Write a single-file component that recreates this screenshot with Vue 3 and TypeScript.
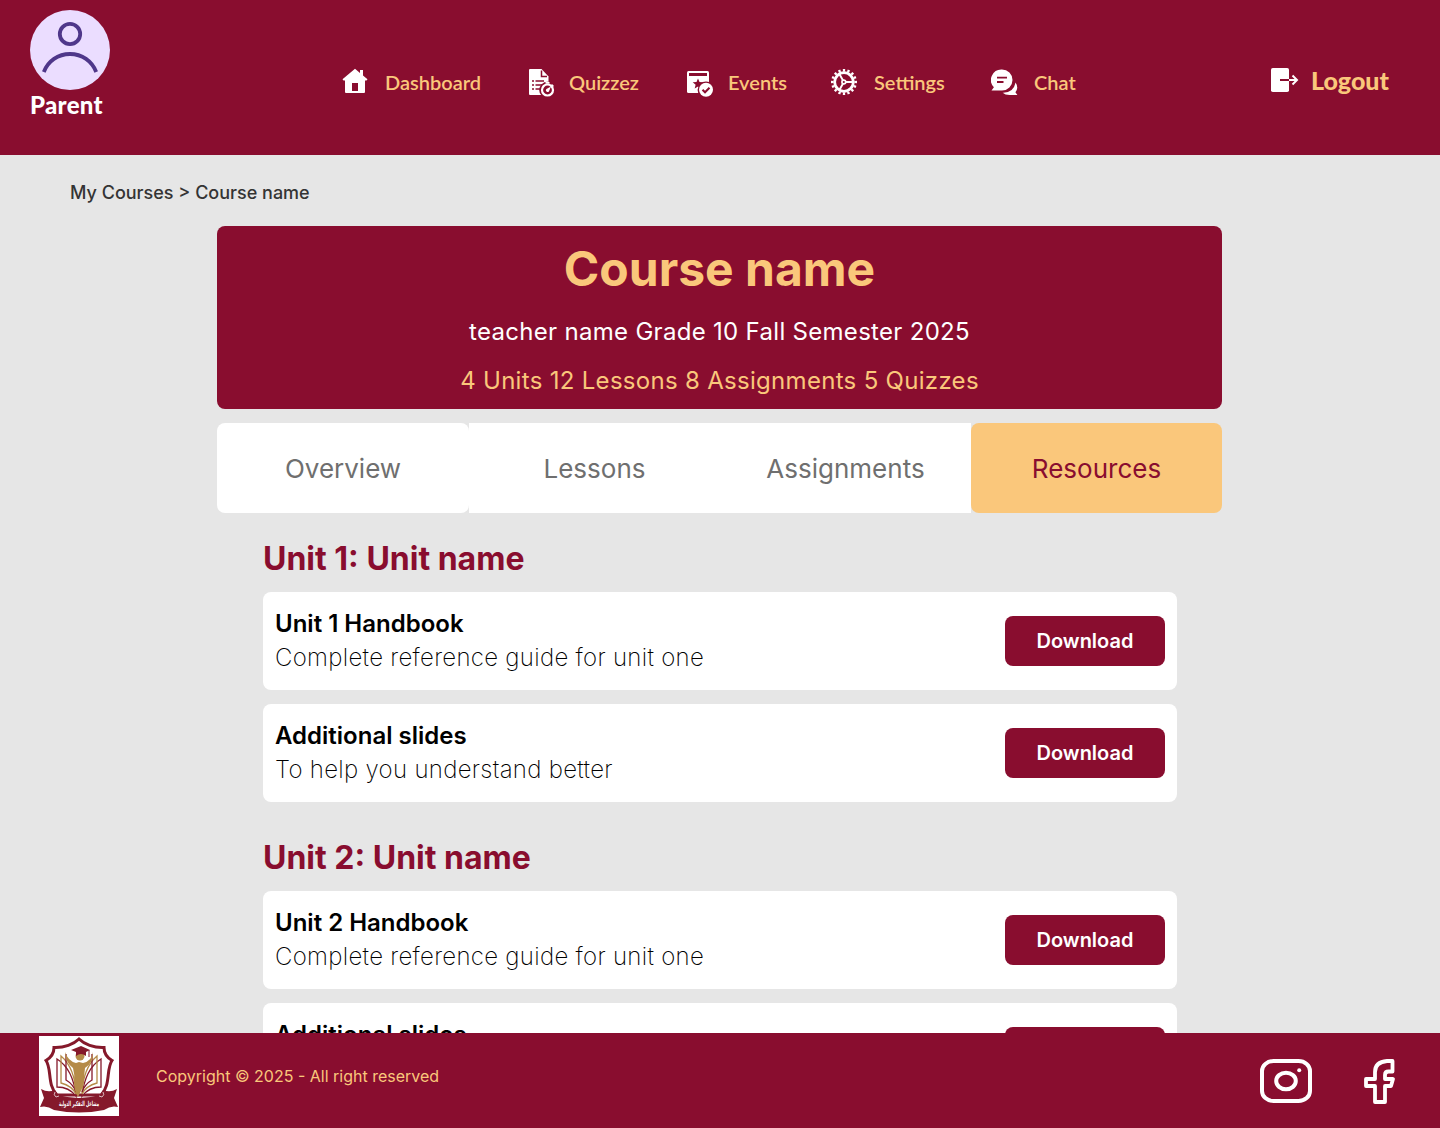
<script setup lang="ts">
interface Resource {
  title: string
  text: string
}
interface Unit {
  title: string
  resources: Resource[]
}

const navItems: { id: string; label: string }[] = [
  { id: 'dashboard', label: 'Dashboard' },
  { id: 'quizzez', label: 'Quizzez' },
  { id: 'events', label: 'Events' },
  { id: 'settings', label: 'Settings' },
  { id: 'chat', label: 'Chat' },
]

const tabs: string[] = ['Overview', 'Lessons', 'Assignments', 'Resources']

const units: Unit[] = [1, 2].map((n) => ({
  title: `Unit ${n}: Unit name`,
  resources: [
    { title: `Unit ${n} Handbook`, text: 'Complete reference guide for unit one' },
    { title: 'Additional slides', text: 'To help you understand better' },
  ],
}))
</script>

<template>
  <div class="page">
    <header class="header">
      <div class="profile">
        <svg class="avatar" viewBox="0 0 80 80" fill="none" stroke="#4f378a" stroke-width="3.8">
          <circle cx="40" cy="40" r="40" fill="#ebddff" stroke="none" />
          <circle cx="40" cy="24" r="10.2" />
          <path d="M13.8 62C18 51 28 44 40 44s22 7 26.200 18" />
        </svg>
        <span class="role">Parent</span>
      </div>

      <nav class="nav">
        <a v-for="item in navItems" :key="item.id" class="nav-item" :class="item.id">
          <svg v-if="item.id === 'dashboard'" class="nav-icon" viewBox="0 0 30 30">
            <path fill="#fff" d="M13 1.800 18 6V3h3v5.500l4.500 3.800-1 1.300H23V25q0 1-1 1H4q-1 0-1-1V13.600H1.500l-1-1.300zM10 16v8h6v-8z" fill-rule="evenodd" />
          </svg>
          <svg v-else-if="item.id === 'quizzez'" class="nav-icon" viewBox="0 0 30 30">
            <path fill="#fff" d="M4 2h11.500L22.500 9.500V28H4q-1 0-1-1V3q0-1 1-1z" />
            <path class="cut-line" stroke-width="1.500" d="M15.500 3.500v6h5.500M6 14h2M9.500 14H18M6 18h2M9.500 18H16M6 22h2M9.500 22H14" />
            <circle class="cut" cx="21.500" cy="23" r="8.300" />
            <path class="cut" d="M23 10v5h2v-5z" />
            <circle cx="21.500" cy="23" r="5.500" fill="none" stroke="#fff" stroke-width="2.200" />
            <path fill="#fff" d="M19.500 15h4v1.700h-4zM26 17l2 1.900-1.200 1.200-1.900-1.900z" />
            <path fill="#fff" d="M25 19.500 22.900 24.400a1.700 1.700 0 1 1-2.500-2.300z" />
          </svg>
          <svg v-else-if="item.id === 'events'" class="nav-icon" viewBox="0 0 30 30">
            <rect x="2" y="4" width="22" height="22" rx="1.500" fill="#fff" />
            <path class="cut" d="M4 6h18v3H4zM13 11.500l1.500 3.500 3.800.300-2.900 2.500.900 3.700-3.300-2-3.300 2 .9-3.700-2.900-2.500 3.800-.3z" />
            <circle class="cut" cx="21" cy="22.800" r="8.400" />
            <circle cx="21" cy="22.800" r="7" fill="#fff" />
            <path class="cut-line" stroke-width="2" d="m17.500 22.800 2.500 2.500 4.500-4.600" />
          </svg>
          <svg v-else-if="item.id === 'settings'" class="nav-icon" viewBox="0 0 30 30" fill="none" stroke="#fff">
            <circle cx="13" cy="15" r="9.300" stroke-width="2.700" />
            <circle cx="13" cy="15" r="11.700" stroke-width="2.600" pathLength="64" stroke-dasharray="2 2" stroke-dashoffset="1" />
            <path stroke-width="1.900" d="M14 15h8M12.300 14 8.400 7M12.300 16 8.400 23" />
            <circle cx="12.800" cy="15" r="1.900" stroke-width="1.600" />
          </svg>
          <svg v-else class="nav-icon" viewBox="0 0 30 30">
            <path fill="#fff" d="M24.600 15.500q3.400 5.500-.2 9.800l2 2.700h-7.800q-4.500 0-7-2.300 10.800.4 13-10.200z" />
            <path fill="#fff" d="M11 2.500a10.500 10.500 0 1 1 0 21H.5l2.400-3.200A10.500 10.500 0 0 1 11 2.500z" />
            <path class="cut-line" stroke-width="1.800" d="M6 10.700h10M6 15h6.500" />
          </svg>
          <span class="nav-label">{{ item.label }}</span>
        </a>
      </nav>

      <a class="logout">
        <svg class="logout-icon" viewBox="0 0 30 28" fill="none">
          <rect x="1" y="2" width="18" height="24" rx="1.800" fill="#fff" />
          <path class="cut-line" stroke-width="2" d="M10 14h9" />
          <path stroke="#fff" stroke-width="2" d="M19 14h8M22.500 9.500 27 14l-4.500 4.500" />
        </svg>
        <span class="logout-label">Logout</span>
      </a>
    </header>

    <main class="main">
      <div class="crumbs">My Courses &gt; Course name</div>

      <div class="course">
        <section class="hero">
          <h1>Course name</h1>
          <p class="teacher">teacher name Grade 10 Fall Semester 2025</p>
          <p class="stats">4 Units 12 Lessons 8 Assignments 5 Quizzes</p>
        </section>

        <div class="tabs">
          <button v-for="tab in tabs" :key="tab" class="tab" :class="tab.toLowerCase()">{{ tab }}</button>
        </div>

        <section v-for="unit in units" :key="unit.title" class="unit">
          <h2>{{ unit.title }}</h2>
          <article v-for="res in unit.resources" :key="res.title" class="card">
            <div>
              <h3>{{ res.title }}</h3>
              <p>{{ res.text }}</p>
            </div>
            <button class="download">Download</button>
          </article>
        </section>
      </div>
    </main>

    <footer class="footer">
      <svg class="crest" viewBox="0 0 80 80">
        <path fill="#fff" d="M0 0h80v80H0z" />
        <path fill="#fff" stroke="#85192b" stroke-width="3" d="M40 3C35 8 25 12 15 11.500c0 6-3 10-8 13C13 33 8 49 18 59h44c10-10 5-26 11-34.500-5-3-8-7-8-13C55 12 45 8 40 3z" />
        <g fill="none" stroke="#85192b" stroke-width="1.300">
          <path fill="#fff" d="M18 23v28q12 0 19 9-3-27-19-37zM62 23v28q-12 0-19 9 3-27 19-37z" />
          <path stroke="#b58b48" d="M22 20v27q11 3 15 11-1-26-15-38zM58 20v27q-11 3-15 11 1-26 15-38z" />
          <path d="M27 18v26q7 4 10 12M53 18v26q-7 4-10 12" />
        </g>
        <path fill="#b58b48" d="M26 16q3 9 11 11l3-1 4 1q9-2 10-11 1 10-8 16-1 9-1 14-2 8-6 15-4-6-4-15 1-7-1-14-8-6-8-16z" />
        <circle cx="41" cy="20" r="4.500" fill="#b58b48" />
        <path fill="#85192b" d="m32 14 10-4 9 4-4 2v4q-5-4-10 0v-4z" />
        <path stroke="#85192b" d="M50 14v7" />
        <path fill="#85192b" d="M2 53q7 4 14 1l3 5q21 6 42 0l3-5q7 3 14-1l-3 9 4 9q-7-2-14 3-25 5-50 0-7-5-14-3l4-9z" />
        <path fill="none" stroke="#fff" stroke-width=".7" d="M16 56q-2 3 1 5l3-1M64 56q2 3-1 5l-3-1" />
        <text x="40" y="70" text-anchor="middle" class="crest-text" textLength="40" lengthAdjust="spacingAndGlyphs">مشاعل التفكير الدولية</text>
      </svg>
      <span class="copyright">Copyright © 2025 - All right reserved</span>
      <div class="social">
        <svg class="instagram" viewBox="0 0 54 46" fill="none" stroke="#fff" stroke-width="4">
          <rect x="3" y="3" width="48" height="40" rx="11.500" ry="10" />
          <ellipse cx="27" cy="23" rx="9.800" ry="8.300" />
          <circle cx="40.200" cy="12.200" r="2" fill="#fff" stroke="none" />
        </svg>
        <svg class="facebook" viewBox="0 0 34 46" fill="none" stroke="#fff" stroke-width="3.800" stroke-linejoin="round">
          <path d="M30.500 3H25Q13 4 13 14v7H4v7h9v16h10V28h6l2-7h-8v-4q0-3.500 3.500-3.500h4z" />
        </svg>
      </div>
    </footer>
  </div>
</template>

<style>
body {
  margin: 0;
  overflow: hidden;
}
</style>

<style scoped>
.page {
  height: 1128px;
  display: flex;
  flex-direction: column;
  background: #e6e6e6;
  font-family: Inter, sans-serif;
  overflow: hidden;
}
h1, h2, h3, p {
  margin: 0;
}
button {
  border: 0;
  font-family: inherit;
}
.header {
  flex: none;
  height: 155px;
  box-sizing: border-box;
  display: flex;
  background: #890d2f;
  font-family: Lato, sans-serif;
}
.profile {
  width: 342px;
  box-sizing: border-box;
  padding: 10px 0 0 30px;
  display: flex;
  flex-direction: column;
}
.avatar {
  width: 80px;
  height: 80px;
}
.role {
  line-height: 30px;
  font-size: 24px;
  font-weight: 900;
  letter-spacing: 0.3px;
  color: #fff;
}
.nav {
  display: grid;
  grid-template-columns: 184px 159px 146px 160px 279px;
  padding-top: 67px;
  height: 30px;
}
.nav-item {
  display: flex;
  align-items: center;
}
.nav-icon {
  width: 30px;
  height: 30px;
  margin-right: 13px;
}
.cut {
  fill: #890d2f;
}
.cut-line {
  fill: none;
  stroke: #890d2f;
}
.nav-label {
  font-size: 20px;
  font-weight: 600;
  line-height: 30px;
  color: #fac77b;
}
.logout {
  display: flex;
  height: 28px;
  padding-top: 66px;
  align-items: center;
}
.logout-icon {
  width: 30px;
  height: 28px;
  margin-right: 11px;
}
.logout-label {
  font-size: 25px;
  font-weight: 900;
  line-height: 28px;
  color: #fac77b;
}
.main {
  flex: 1;
  min-height: 0;
  overflow: hidden;
}
.crumbs {
  padding: 26px 0 0 70px;
  height: 45px;
  line-height: 24px;
  font-size: 18px;
  font-weight: 500;
  color: #343434;
}
.course {
  width: 1005px;
  margin-left: 217px;
}
.hero {
  height: 183px;
  box-sizing: border-box;
  padding-top: 13px;
  border-radius: 8px;
  background: #890d2f;
  text-align: center;
  color: #fac77b;
}
.hero h1 {
  font-size: 48px;
  line-height: 60px;
  font-weight: 700;
}
.hero p {
  font-size: 24px;
  line-height: 30px;
  letter-spacing: 0.3px;
}
.hero .teacher {
  margin-top: 18px;
  color: #fff;
}
.hero .stats {
  margin-top: 19px;
}
.tabs {
  display: grid;
  grid-template-columns: 252px 251px 251px 251px;
  height: 90px;
  margin-top: 14px;
}
.tab {
  padding: 0;
  background: #fff;
  color: #6f6f6f;
  font-size: 26px;
}
.overview {
  border-radius: 8px;
}
.resources {
  border-radius: 8px;
  background: #fac77b;
  color: #890d2f;
}
.unit {
  width: 914px;
  margin-left: 46px;
  padding-top: 22px;
}
.unit:not(:last-child) {
  margin-bottom: -4px;
}
.unit h2 {
  height: 57px;
  line-height: 48px;
  font-size: 32px;
  font-weight: 700;
  color: #890d2f;
}
.card {
  height: 98px;
  box-sizing: border-box;
  margin-bottom: 14px;
  padding: 0 12px;
  display: flex;
  align-items: center;
  justify-content: space-between;
  border-radius: 8px;
  background: #fff;
  color: #000;
}
.card h3 {
  font-size: 24px;
  line-height: 34px;
  font-weight: 600;
}
.card p {
  font-size: 24px;
  line-height: 34px;
  font-weight: 200;
  letter-spacing: 0.3px;
}
.download {
  width: 160px;
  height: 50px;
  border-radius: 8px;
  background: #890d2f;
  color: #fff;
  font-size: 20px;
  font-weight: 600;
}
.footer {
  flex: none;
  height: 95px;
  box-sizing: border-box;
  padding: 3px 44px 0 39px;
  display: flex;
  align-items: flex-start;
  background: #890d2f;
}
.crest {
  width: 80px;
  height: 80px;
}
.crest-text {
  font: bold 7px "DejaVu Sans", sans-serif;
  fill: #fff;
}
.copyright {
  margin-left: 37px;
  padding-top: 28px;
  line-height: 24px;
  font-size: 16px;
  color: #fac77b;
}
.social {
  margin-left: auto;
  padding-top: 22px;
  display: flex;
}
.instagram {
  width: 54px;
  height: 46px;
  margin-right: 49px;
}
.facebook {
  width: 34px;
  height: 46px;
}
</style>
